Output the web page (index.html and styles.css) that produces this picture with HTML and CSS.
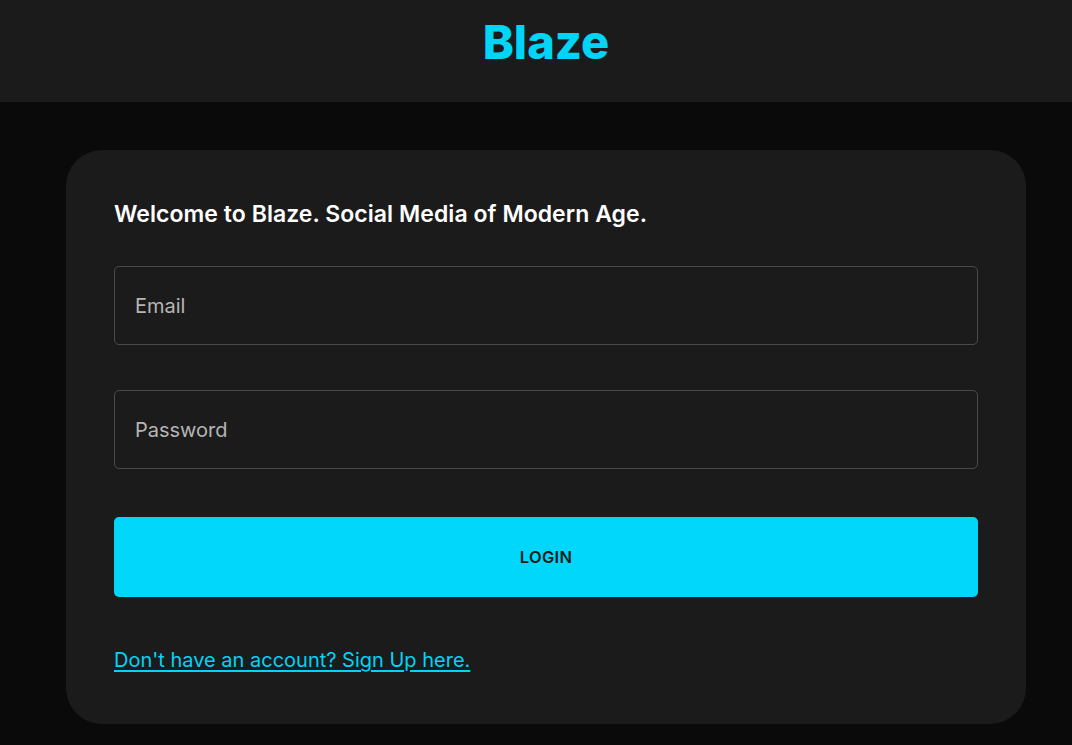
FILE: index.html
```html
<!DOCTYPE html>
<html lang="en">
<head>
<meta charset="utf-8">
<title>Blaze</title>
<link rel="stylesheet" href="styles.css">
</head>
<body>
<header class="topbar">
  <h1 class="logo">Blaze</h1>
</header>
<main class="page">
  <section class="card">
    <h2 class="welcome">Welcome to Blaze. Social Media of Modern Age.</h2>
    <form class="form">
      <input class="field" type="email" placeholder="Email">
      <input class="field" type="password" placeholder="Password">
      <button class="login" type="button">LOGIN</button>
    </form>
    <a class="signup" href="#">Don't have an account? Sign Up here.</a>
  </section>
</main>
</body>
</html>
```

FILE: styles.css
```css
* { box-sizing: border-box; }
html, body {
  margin: 0;
  padding: 0;
  background: #0a0a0a;
  font-family: "Inter", "Noto Sans", sans-serif;
  height: 100%;
}
.topbar {
  background: #1b1b1b;
  height: 102px;
  display: flex;
  align-items: center;
  justify-content: center;
  padding-left: 20px;
}
.logo {
  margin: 0;
  color: #00d4f7;
  font-size: 47px;
  font-weight: 800;
  letter-spacing: 0;
  padding-bottom: 20px;
}
.page {
  padding: 48px 46px 0 66px;
}
.card {
  background: #1b1b1b;
  border-radius: 36px;
  padding: 48px 48px 50px 48px;
  width: 960px;
}
.welcome {
  margin: 0;
  color: #ffffff;
  font-size: 23px;
  font-weight: 600;
  line-height: 32px;
  letter-spacing: 0.05px;
}
.form {
  display: flex;
  flex-direction: column;
  margin-top: 36px;
}
.field {
  height: 79px;
  background: #1b1b1b;
  border: 1px solid #4a4a4a;
  border-radius: 5px;
  padding: 0 20px;
  font-family: inherit;
  font-size: 20px;
  color: #fff;
  outline: none;
}
.field + .field { margin-top: 45px; }
.field::placeholder { color: #b5b5b5; }
.login {
  margin-top: 48px;
  height: 80px;
  border: none;
  border-radius: 5px;
  background: #00d7fa;
  color: #1b1b1b;
  font-family: inherit;
  font-size: 16.5px;
  font-weight: 600;
  letter-spacing: 0.3px;
}
.signup {
  display: inline-block;
  margin-top: 49px;
  color: #00d4f7;
  font-size: 20px;
  line-height: 28px;
  text-decoration: underline;
  text-underline-offset: 3px;
}
```
